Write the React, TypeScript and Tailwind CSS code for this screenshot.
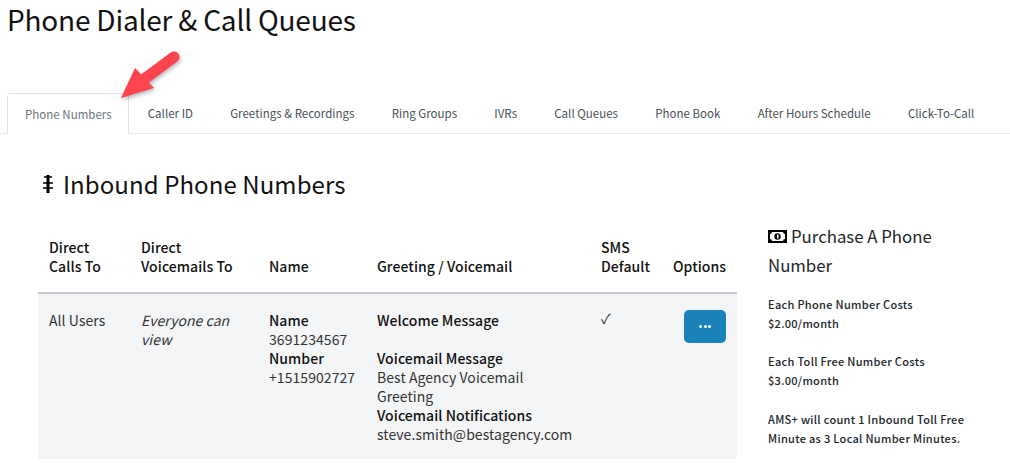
import React from "react";

const font = { fontFamily: '"Noto Sans CJK SC", "Noto Sans", sans-serif' };

const tabs = [
  "Phone Numbers",
  "Caller ID",
  "Greetings & Recordings",
  "Ring Groups",
  "IVRs",
  "Call Queues",
  "Phone Book",
  "After Hours Schedule",
  "Click-To-Call",
];

const ArrowMark = () => (
  <svg
    className="absolute left-[115px] top-[47px] drop-shadow-[1px_2px_2px_rgba(0,0,0,0.3)]"
    width="70"
    height="58"
    viewBox="0 0 70 58"
  >
    <path
      d="M59 10 L28 33"
      stroke="#fd444f"
      strokeWidth="11"
      strokeLinecap="round"
      fill="none"
    />
    <path d="M6 51 L20 21 L39 41 Z" fill="#fd444f" />
  </svg>
);

const App: React.FC = () => {
  return (
    <div className="relative h-[463px] w-[1010px] overflow-hidden bg-white text-[#212529]" style={font}>
      <ArrowMark />

      {/* HEADER */}
      <h1 className="h-[93px] pl-[7px] text-[28px] leading-[38px] tracking-[-0.2px] font-normal text-[#111]">
        Phone Dialer &amp; Call Queues
      </h1>

      {/* TABS */}
      <div className="flex h-[41px] border-b border-[#e9ecef] pl-[7px] text-[11.5px] leading-[40px] tracking-[0.02px] whitespace-nowrap text-[#495057]">
        {tabs.map((tab, i) => (
          <div
            key={tab}
            className={
              i === 0
                ? "h-[41px] rounded-t-[4px] border border-b-0 border-[#dee2e6] bg-white pl-[17px] pr-[16.5px] text-[#6c757d]"
                : "px-[18.6px]"
            }
          >
            {tab}
          </div>
        ))}
      </div>

      {/* SECTION TITLE */}
      <h2 className="flex items-center pl-[39px] pt-[30px] text-[24px] leading-[40px] tracking-[0.08px] font-normal text-[#111]">
        <svg width="16" height="20" viewBox="0 0 16 20" className="mr-[8px]">
          <path d="M5 3 H13 M4 9 H14 M4 14 H14" stroke="#000" strokeWidth="1.6" fill="none" />
          <path d="M9 1 V19" stroke="#000" strokeWidth="3" fill="none" />
        </svg>
        Inbound Phone Numbers
      </h2>

      <div className="flex pl-[38px] pt-[20px]">
        {/* TABLE */}
        <table className="h-[235px] w-[699px] table-fixed border-collapse text-[14px] leading-[19px] tracking-[0.06px]">
          <thead>
            <tr className="h-[69px] border-b-2 border-[#c8ccd2] align-bottom text-[#111]">
              <th className="w-[92px] pb-[16px] pl-[11px] text-left font-medium">Direct<br />Calls To</th>
              <th className="w-[128px] pb-[16px] pl-[11px] text-left font-medium">Direct<br />Voicemails To</th>
              <th className="w-[108px] pb-[16px] pl-[11px] text-left font-medium">Name</th>
              <th className="w-[224px] pb-[16px] pl-[11px] text-left font-medium">Greeting / Voicemail</th>
              <th className="w-[72px] pb-[16px] pl-[11px] text-left font-medium">SMS<br />Default</th>
              <th className="pb-[16px] pl-[11px] text-left font-medium">Options</th>
            </tr>
          </thead>
          <tbody>
            <tr className="h-[166px] bg-[#f4f5f7] align-top text-[#333]">
              <td className="pl-[11px] pt-[17px]">All Users</td>
              <td className="pl-[11px] pr-[8px] pt-[17px] italic">Everyone can view</td>
              <td className="pl-[11px] pt-[17px]">
                <div className="font-medium text-[#111]">Name</div>
                <div>3691234567</div>
                <div className="font-medium text-[#111]">Number</div>
                <div>+1515902727</div>
              </td>
              <td className="pl-[11px] pr-[8px] pt-[17px]">
                <div className="font-medium text-[#111]">Welcome Message</div>
                <div className="mt-[19px] font-medium text-[#111]">Voicemail Message</div>
                <div>Best Agency Voicemail Greeting</div>
                <div className="font-medium text-[#111]">Voicemail Notifications</div>
                <div>steve.smith@bestagency.com</div>
              </td>
              <td className="pl-[11px] pt-[15px]">✓</td>
              <td className="pl-[22px] pt-[16px]">
                <button className="flex h-[33px] w-[42px] items-center justify-center gap-[1.5px] rounded-[5px] bg-[#1a82b8]">
                  <span className="h-[3px] w-[3px] rounded-full bg-white" />
                  <span className="h-[3px] w-[3px] rounded-full bg-white" />
                  <span className="h-[3px] w-[3px] rounded-full bg-white" />
                </button>
              </td>
            </tr>
          </tbody>
        </table>

        {/* PURCHASE PANEL */}
        <div className="ml-[31px] w-[205px] -mt-[2px] text-[#212529]">
          <div className="text-[16.8px] leading-[29px]">
            <svg width="19" height="13" viewBox="0 0 19 13" className="mr-[4px] inline-block align-[0px]">
              <rect x="0" y="0" width="19" height="13" fill="#000" />
              <path d="M4 2 H15 Q15 4 17 4 V9 Q15 9 15 11 H4 Q4 9 2 9 V4 Q4 4 4 2 Z" fill="#fff" />
              <circle cx="9.5" cy="6.5" r="3.2" fill="#000" />
              <rect x="9" y="4.5" width="1.5" height="4" fill="#fff" />
            </svg>
            Purchase A Phone Number
          </div>
          <div className="mt-[15px] text-[11px] leading-[19px] tracking-[0.3px] font-medium">
            <p>Each Phone Number Costs<br />$2.00/month</p>
            <p className="mt-[19px]">Each Toll Free Number Costs<br />$3.00/month</p>
            <p className="mt-[20px]">AMS+ will count 1 Inbound Toll Free<br />Minute as 3 Local Number Minutes.</p>
          </div>
        </div>
      </div>
    </div>
  );
};

export default App;
